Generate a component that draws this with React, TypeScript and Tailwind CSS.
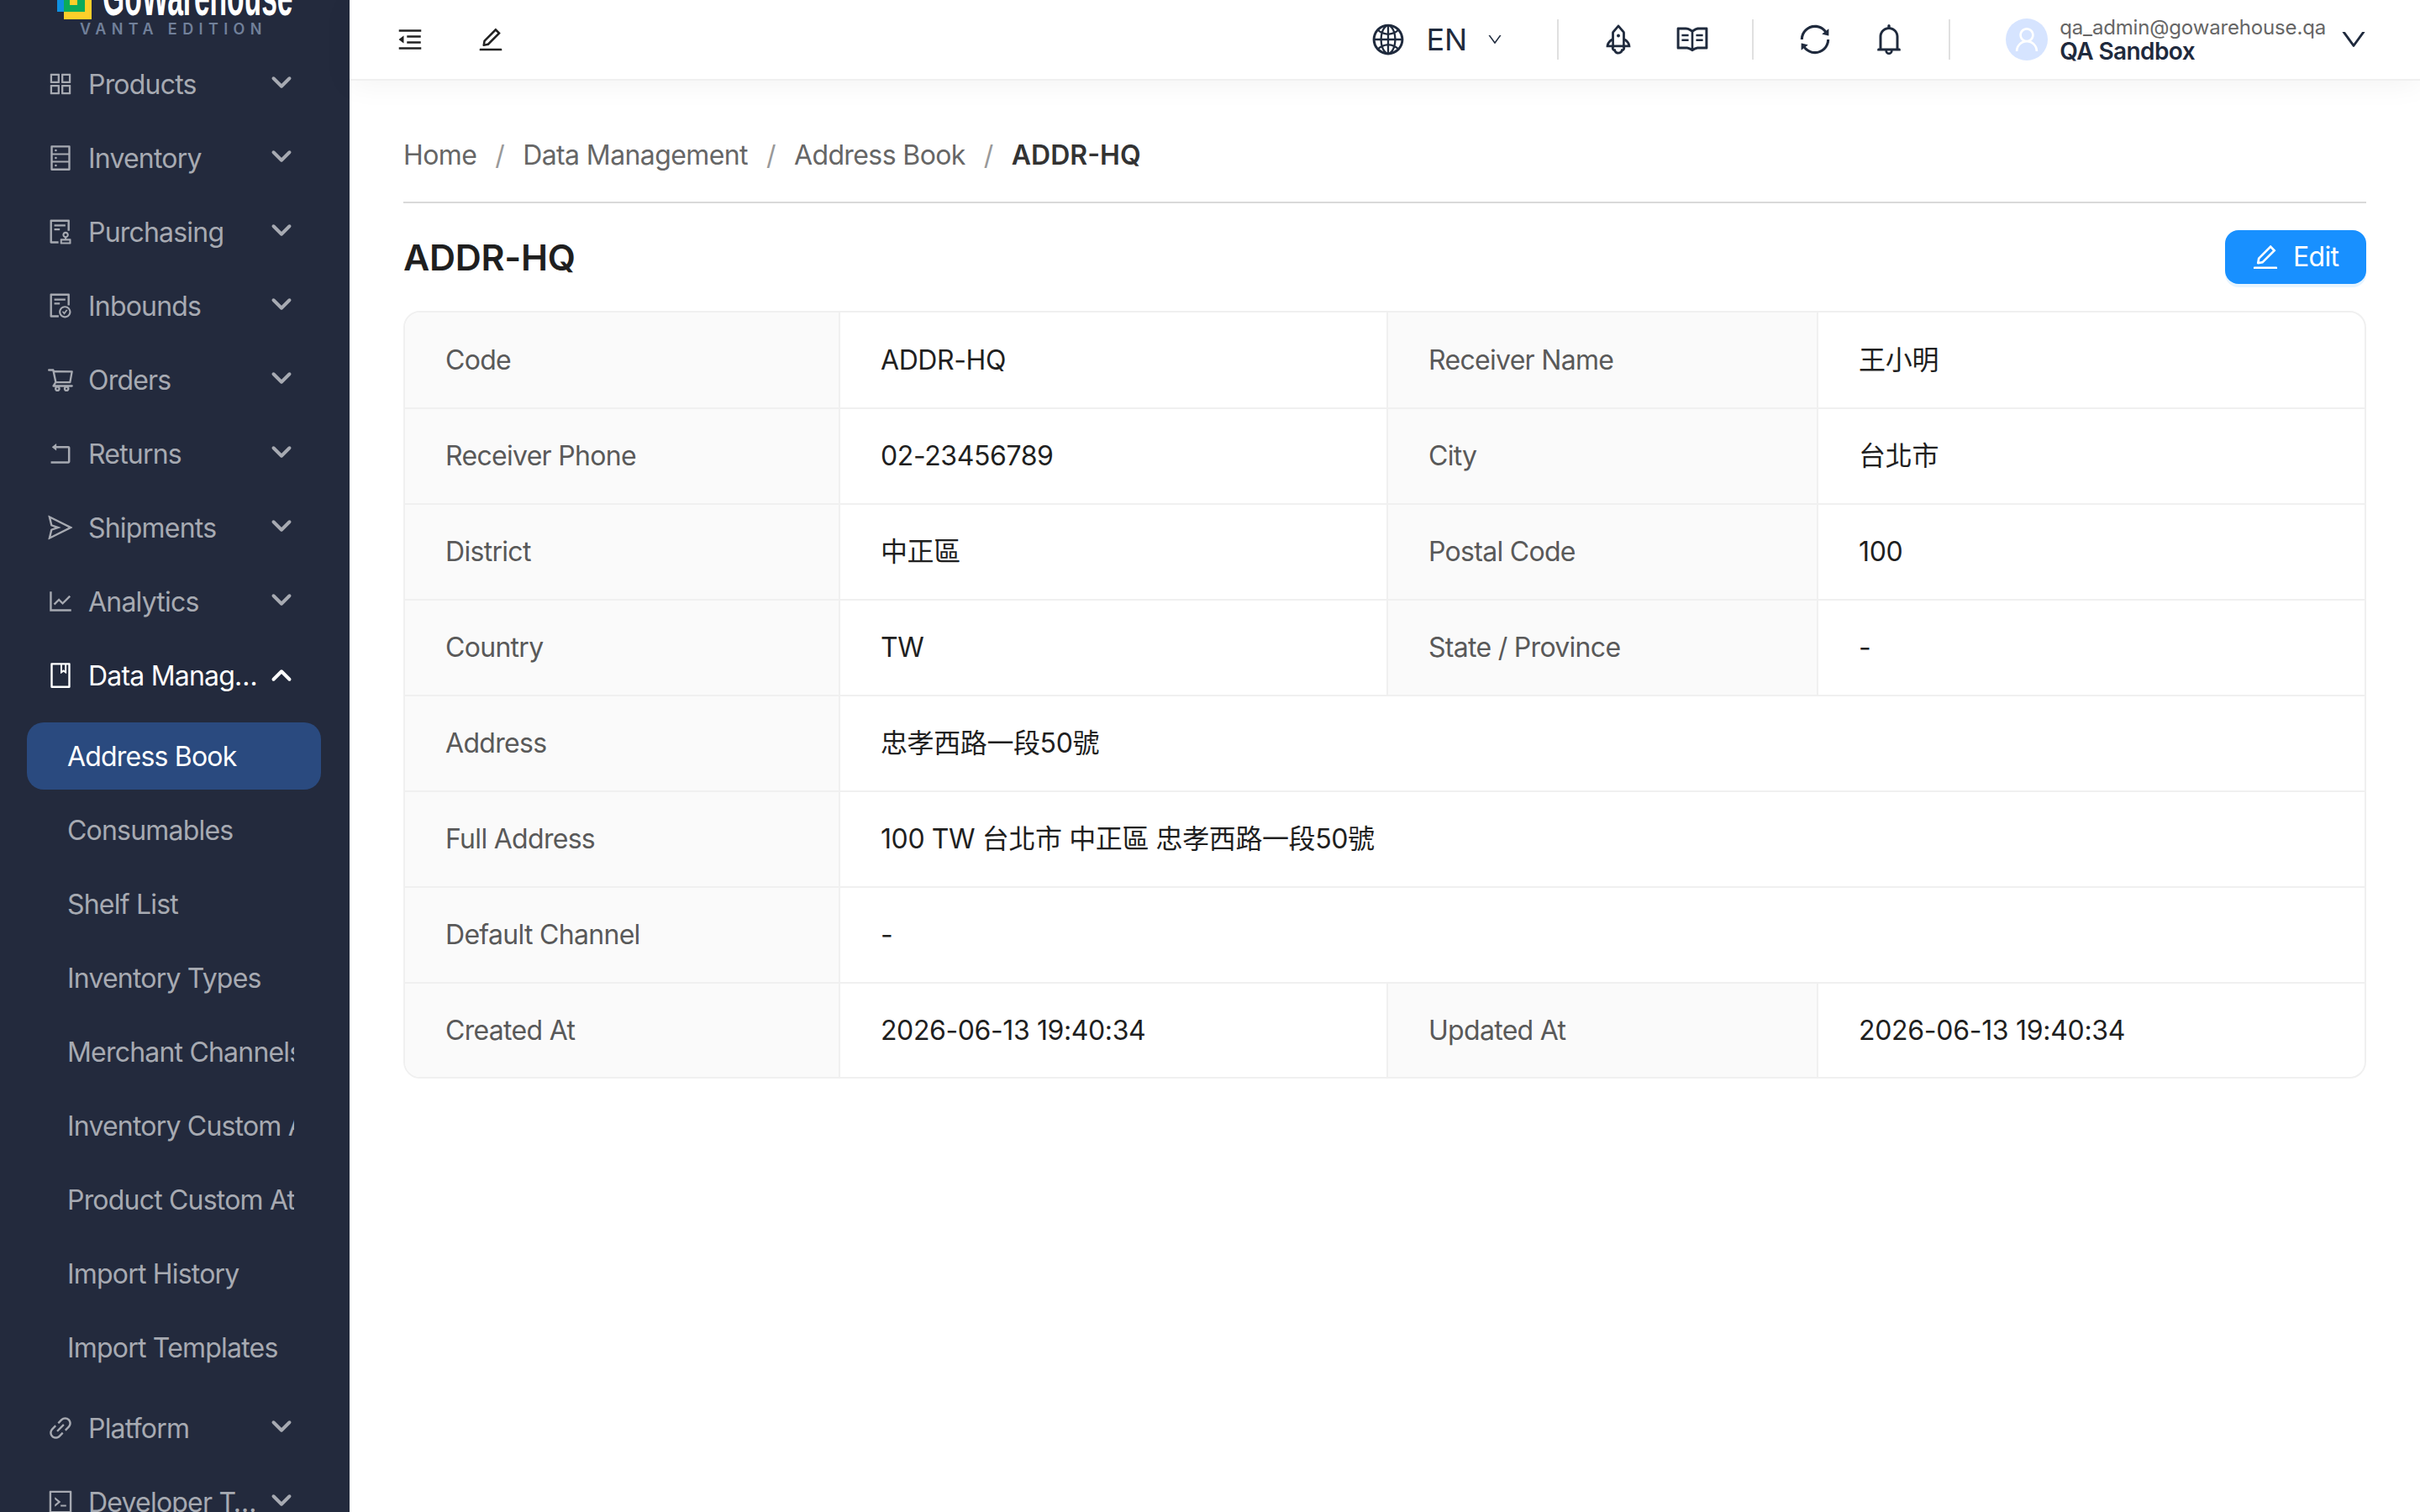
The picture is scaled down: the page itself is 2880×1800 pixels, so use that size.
import { ChevronDown, ChevronUp } from "lucide-react";
import {
  AiOutlineAppstore,
  AiOutlineAudit,
  AiOutlineBell,
  AiOutlineBook,
  AiOutlineCode,
  AiOutlineDatabase,
  AiOutlineDown,
  AiOutlineEdit,
  AiOutlineFileDone,
  AiOutlineGlobal,
  AiOutlineLineChart,
  AiOutlineLink,
  AiOutlineMenuFold,
  AiOutlineRead,
  AiOutlineRocket,
  AiOutlineRollback,
  AiOutlineSend,
  AiOutlineShoppingCart,
  AiOutlineSync,
  AiOutlineUser,
} from "react-icons/ai";
import type { IconType } from "react-icons";

const TOP_MENU: [string, IconType][] = [
  ["Products", AiOutlineAppstore],
  ["Inventory", AiOutlineDatabase],
  ["Purchasing", AiOutlineAudit],
  ["Inbounds", AiOutlineFileDone],
  ["Orders", AiOutlineShoppingCart],
  ["Returns", AiOutlineRollback],
  ["Shipments", AiOutlineSend],
  ["Analytics", AiOutlineLineChart],
];

const SUB_MENU = [
  "Consumables",
  "Shelf List",
  "Inventory Types",
  "Merchant Channels",
  "Inventory Custom Attributes",
  "Product Custom Attributes",
  "Import History",
  "Import Templates",
];

function MenuItem({
  label,
  icon: Icon,
  open,
}: {
  label: string;
  icon: IconType;
  open?: boolean;
}) {
  return (
    <div
      className={`flex items-center h-[80px] mb-[8px] pl-[55px] pr-[62px] ${
        open ? "text-white" : "text-[#a7aab2]"
      }`}
    >
      <Icon size={34} className="shrink-0" />
      <span className="ml-[16px] mt-[2px] w-[204px] truncate">{label}</span>
      {open ? (
        <ChevronUp size={38} strokeWidth={2.5} className="ml-auto shrink-0" />
      ) : (
        <ChevronDown size={38} strokeWidth={2.5} className="ml-auto shrink-0 -mt-[4px]" />
      )}
    </div>
  );
}

function Sidebar() {
  return (
    <aside className="w-[416px] shrink-0 h-screen overflow-hidden bg-[#232a3d] text-[32px] leading-[44px] tracking-[-0.8px]">
      <div className="-mt-[40px] h-[100px] tracking-normal">
        <div className="flex items-end h-[63px] pl-[68px]">
          <svg width="42" height="23" viewBox="0 0 42 23" className="shrink-0">
            <rect x="0" y="0" width="8" height="14" fill="#0f8fe0" />
            <rect x="8" y="0" width="33" height="23" fill="#fccf2a" />
            <rect x="8" y="0" width="25" height="14" fill="#0bab5b" />
            <rect x="15" y="0" width="9" height="6" fill="#fccf2a" />
          </svg>
          <span className="ml-[12px] -mb-[5px] text-[64px] leading-[64px] font-bold text-white font-['Liberation_Sans'] whitespace-nowrap origin-left scale-x-[0.525]">
            GoWarehouse
          </span>
        </div>
        <div className="pl-[95px] mt-[2px] text-[18px] leading-[20px] font-semibold tracking-[6.4px] text-[#71809a] whitespace-nowrap">
          VANTA EDITION
        </div>
      </div>
      {TOP_MENU.map(([label, icon]) => (
        <MenuItem key={label} label={label} icon={icon} />
      ))}
      <MenuItem label="Data Management" icon={AiOutlineBook} open />
      <div className="mt-[16px] pb-[8px]">
        <div className="flex items-center ml-[32px] mr-[34px] h-[80px] mb-[8px] pl-[48px] pt-[2px] rounded-[20px] bg-[#2a4a7f] text-white">
          Address Book
        </div>
        {SUB_MENU.map((label) => (
          <div key={label} className="flex items-center ml-[32px] mr-[34px] h-[80px] mb-[8px] pl-[48px] pt-[2px] pr-[32px] text-[#a7aab2]">
            <span className="block w-full overflow-hidden whitespace-nowrap">{label}</span>
          </div>
        ))}
      </div>
      <MenuItem label="Platform" icon={AiOutlineLink} />
      <MenuItem label="Developer Tools" icon={AiOutlineCode} />
    </aside>
  );
}

function Divider() {
  return <div className="w-[2px] h-[48px] bg-[#e0e0e0]" />;
}

function Header() {
  return (
    <header className="relative flex items-center h-[94px] shrink-0 bg-white pl-[55px] pr-[61px] shadow-[0_2px_0_#f0f0f0,0_6px_36px_rgba(0,0,0,0.05)]">
      <AiOutlineMenuFold size={34} className="text-[#222222]" />
      <AiOutlineEdit size={34} className="ml-[62px] text-[#222222]" />
      <div className="ml-auto flex items-center text-[#1f2a3d]">
        <AiOutlineGlobal size={42} />
        <span className="ml-[24px] text-[36px] leading-[44px]">EN</span>
        <AiOutlineDown size={20} className="ml-[23px]" />
        <div className="ml-[64px]">
          <Divider />
        </div>
        <AiOutlineRocket size={42} className="ml-[50px]" />
        <AiOutlineRead size={42} className="ml-[46px]" />
        <div className="ml-[50px]">
          <Divider />
        </div>
        <AiOutlineSync size={42} className="ml-[52px]" />
        <AiOutlineBell size={42} className="ml-[46px]" />
        <div className="ml-[50px]">
          <Divider />
        </div>
        <div className="ml-[66px] flex items-center justify-center w-[50px] h-[50px] rounded-full bg-[#d6e4ff] text-white">
          <AiOutlineUser size={36} />
        </div>
        <div className="ml-[14px] flex flex-col">
          <span className="text-[24px] leading-[28px] tracking-[-0.16px] text-[#666666]">qa_admin@gowarehouse.qa</span>
          <span className="text-[28px] leading-[28px] font-semibold tracking-[-0.6px]">QA Sandbox</span>
        </div>
        <AiOutlineDown size={36} className="ml-[15px]" />
      </div>
    </header>
  );
}

function Label({ children }: { children: string }) {
  return (
    <td className="bg-[#fafafa] pl-[48px] text-[#595959] tracking-[-0.7px] border-r-2 border-[#f0f0f0]">{children}</td>
  );
}

function Row({
  cells,
  last,
}: {
  cells: string[];
  last?: boolean;
}) {
  const border = last ? "" : "border-b-2 border-[#f0f0f0]";
  return (
    <tr className={`${last ? "h-[112px]" : "h-[114px]"} ${border}`}>
      <Label>{cells[0]}</Label>
      {cells.length === 2 ? (
        <td colSpan={3} className="pl-[48px] tracking-[-0.4px]">{cells[1]}</td>
      ) : (
        <>
          <td className="pl-[48px] tracking-[-0.4px] border-r-2 border-[#f0f0f0]">{cells[1]}</td>
          <Label>{cells[2]}</Label>
          <td className="pl-[48px] tracking-[-0.3px]">{cells[3]}</td>
        </>
      )}
    </tr>
  );
}

export default function App() {
  return (
    <div className="flex h-screen overflow-hidden bg-white font-['Inter','Noto_Sans_CJK_TC',sans-serif]">
      <Sidebar />
      <div className="flex-1 flex flex-col min-w-0">
        <Header />
        <main className="px-[64px] text-[32px] leading-[44px]">
          <nav className="flex items-start h-[148px] pt-[69px] border-b-2 border-[#d9d9d9] text-[#666666] tracking-[-0.6px]">
            <span>Home</span>
            <span className="mx-[22px] text-[#999999]">/</span>
            <span>Data Management</span>
            <span className="mx-[22px] text-[#999999]">/</span>
            <span>Address Book</span>
            <span className="mx-[22px] text-[#999999]">/</span>
            <span className="font-semibold text-[#333333] tracking-normal">ADDR-HQ</span>
          </nav>
          <div className="flex items-center justify-between mt-[32px] mb-[32px] h-[64px]">
            <h1 className="text-[43px] leading-[64px] font-semibold tracking-[-0.3px] text-[#1f1f1f]">ADDR-HQ</h1>
            <button
              type="button"
              className="flex items-center h-[64px] w-[168px] pl-[30px] rounded-[16px] bg-[#1890ff] text-white shadow-[0_4px_0_#e6f4ff] tracking-[-0.7px]"
            >
              <AiOutlineEdit size={36} />
              <span className="ml-[15px]">Edit</span>
            </button>
          </div>
          <div className="rounded-[20px] border-2 border-[#f0f0f0] overflow-hidden">
            <table className="w-full table-fixed text-[#1f1f1f]">
              <colgroup>
                <col className="w-[517px]" />
                <col className="w-[652px]" />
                <col className="w-[512px]" />
                <col />
              </colgroup>
              <tbody>
                <Row cells={["Code", "ADDR-HQ", "Receiver Name", "王小明"]} />
                <Row cells={["Receiver Phone", "02-23456789", "City", "台北市"]} />
                <Row cells={["District", "中正區", "Postal Code", "100"]} />
                <Row cells={["Country", "TW", "State / Province", "-"]} />
                <Row cells={["Address", "忠孝西路一段50號"]} />
                <Row cells={["Full Address", "100 TW 台北市 中正區 忠孝西路一段50號"]} />
                <Row cells={["Default Channel", "-"]} />
                <Row cells={["Created At", "2026-06-13 19:40:34", "Updated At", "2026-06-13 19:40:34"]} last />
              </tbody>
            </table>
          </div>
        </main>
      </div>
    </div>
  );
}
